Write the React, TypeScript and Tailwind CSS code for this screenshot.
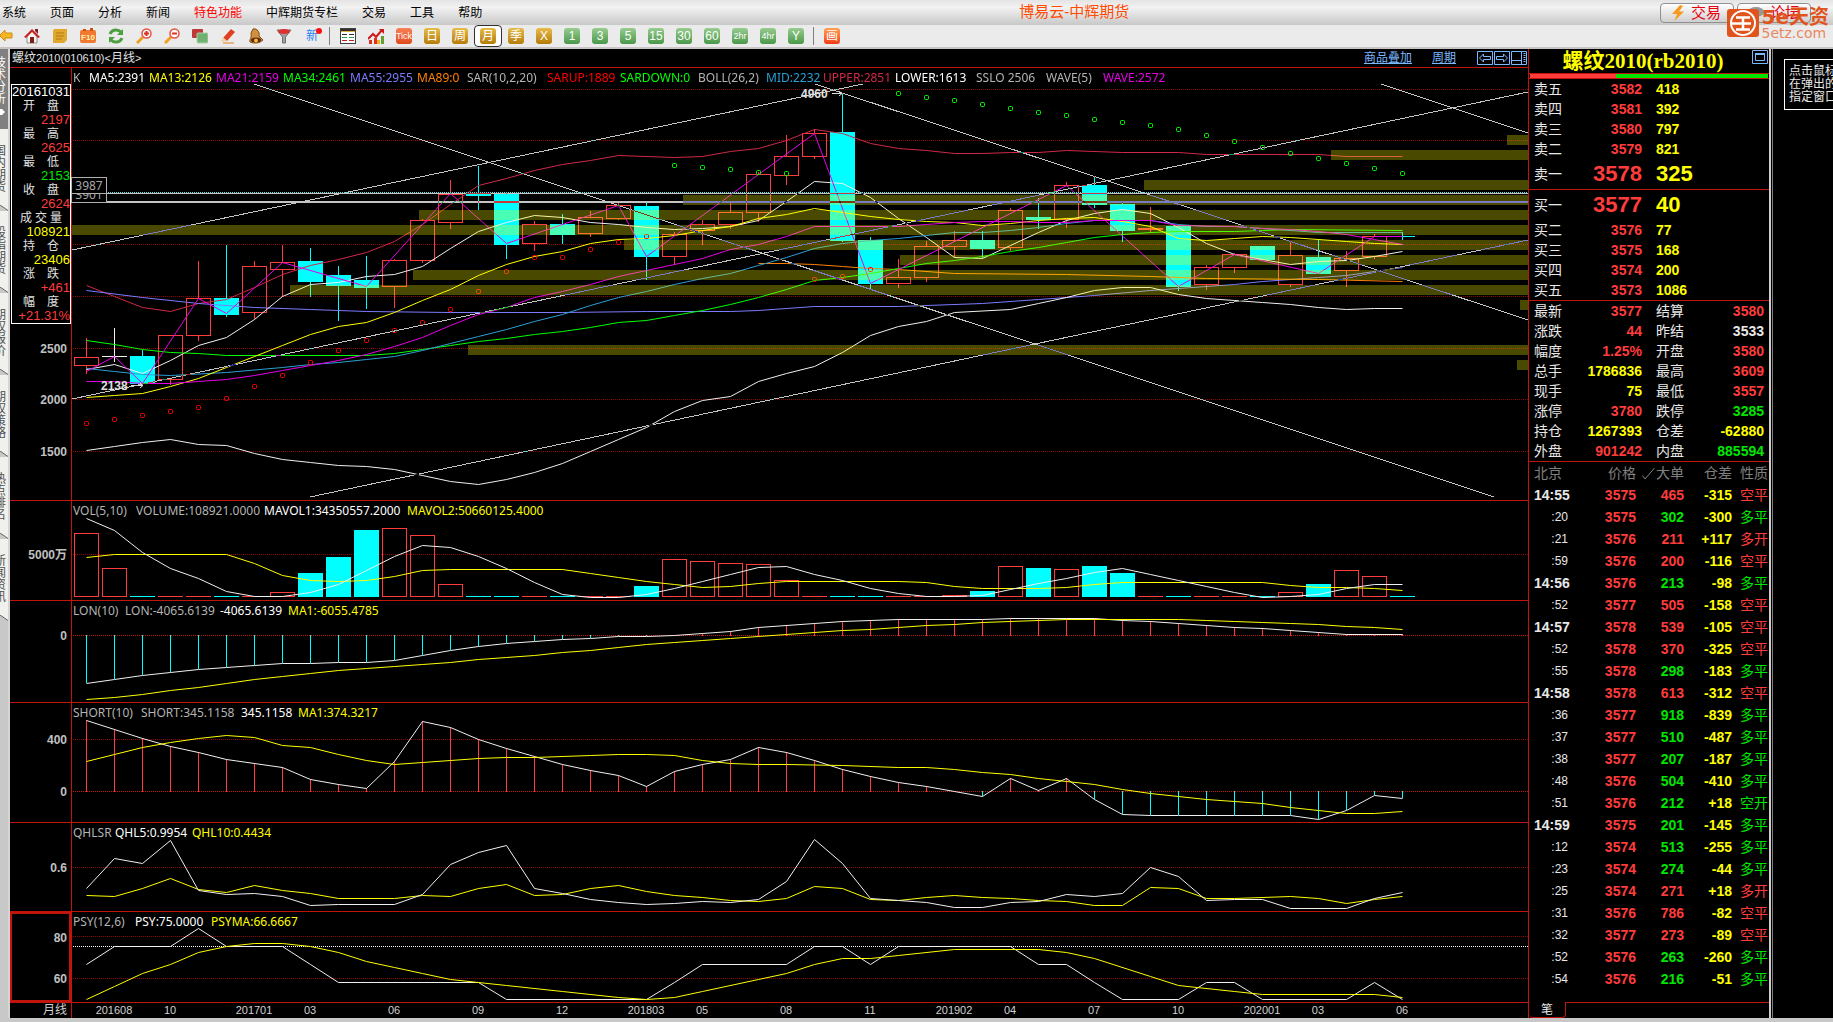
import type { ReactNode } from "react";
import { clsx } from "clsx";

type Point = [number, number];
type Candle = { up: boolean; open: number; close: number; high: number; low: number; color?: string };

const STEP = 28;
const FIRST_X = 86;
const xAt = (i: number) => FIRST_X + i * STEP;

const RED = "#ff3c3c";
const CYAN = "#00ffff";
const YELLOW = "#ffff00";
const GREEN = "#00ff00";
const WHITE = "#f0f0f0";
const MAGENTA = "#e600e6";

// "i:y i:y ..." where i is the bar index
const parse = (s: string): Point[] =>
  s.split(" ").map((p) => p.split(":").map(Number) as Point);

// dir, body top, body bottom, high, low
const CANDLES: Candle[] = (
  "r 357 365 338 373|w 356 356 328 361|c 356 383 350 385|r 335 379 335 384|r 298 335 261 340|c 298 314 245 316|" +
  "r 266 312 261 318|r 262 269 245 296|c 261 281 248 296|c 275 285 266 320|c 280 287 256 308|r 260 286 259 307|" +
  "r 220 260 219 262|r 194 222 180 228|c 193 195 166 209|c 194 244 193 258|r 224 243 221 250|c 224 234 214 243|" +
  "r 217 233 211 236|r 205 218 203 219|c 206 256 203 279|r 234 256 232 264|r 224 230 220 244|r 212 224 203 228|" +
  "r 174 212 172 221|r 156 175 135 184|r 133 156 129 158|c 132 240 93 241|c 240 283 237 289|r 277 283 259 287|" +
  "r 246 277 241 281|r 240 246 231 257|c 240 248 231 257|r 210 247 208 250|c 217 219 198 228|r 185 219 182 227|" +
  "c 185 204 176 207|c 204 230 202 241|r 228 229 207 232|c 226 286 225 290|r 267 284 265 289|r 254 267 253 272|" +
  "c 246 259 246 259|r 255 284 241 286|c 257 273 239 273|r 258 270 251 286|r 236 256 234 258|c 236 237 232 239"
)
  .split("|")
  .map((row) => {
    const [dir, open, close, high, low] = row.split(" ");
    return {
      up: dir === "r",
      color: dir === "w" ? WHITE : undefined,
      open: +open,
      close: +close,
      high: +high,
      low: +low,
    };
  });

const MAIN_LINES: { color: string; points: string }[] = [
  {
    color: "#d02848",
    points:
      "0:285 1:296 2:307 3:311 4:303 5:299 6:287 7:274 8:265 9:259 10:252 11:241 12:224 13:204 14:185 15:178 16:170 17:164 18:160 19:155 21:157 22:156 23:151 24:148 25:140 26:129 27:133 28:143 29:148 30:150 31:153 32:153 33:152 34:152 35:150 37:152 39:152 40:154 44:154 45:156 47:156",
  },
  {
    color: "#7b7bff",
    points:
      "0:290 2:297 4:303 6:307 8:309 10:311 13:312 17:312 20:311 23:311 24:310 26:306 29:306 32:303 34:299 36:295 38:290 39:288 40:286 41:284 42:281 43:279 44:277 45:275 46:271 47:267",
  },
  { color: "#ff8000", points: "24:263 25:263 26:264 27:266 28:268 29:269 31:273 35:274 38:276 39:277 40:278 44:279 47:281" },
  {
    color: WHITE,
    points:
      "0:450 1:446 2:442 3:439 4:444 5:445 6:453 7:459 8:462 9:465 10:466 11:469 12:475 13:481 14:484 15:479 16:472 17:463 18:451 19:439 20:427 21:411 22:400 23:396 24:381 25:373 26:366 27:352 28:335 29:326 30:321 31:312 33:309 34:303 35:297 36:290 37:287 38:287 39:294 40:298 41:300 42:302 43:304 44:307 45:309 46:308 47:308",
  },
  {
    color: WHITE,
    points:
      "0:369 1:364 2:373 3:360 4:345 5:337 6:319 7:296 8:284 9:282 10:276 11:274 12:266 13:248 14:231 15:222 16:215 17:217 18:222 19:224 20:227 21:229 22:228 23:226 24:220 25:201 26:181 27:183 28:197 29:218 30:237 31:257 32:258 33:245 34:232 35:220 36:213 37:209 38:213 39:227 40:243 41:254 42:259 43:264 44:261 45:260 46:256 47:251",
  },
  {
    color: GREEN,
    points:
      "0:340 1:344 2:349 3:352 4:353 5:355 10:355 11:353 12:349 13:345 14:341 15:338 16:334 17:331 18:327 19:322 20:320 21:315 22:310 23:304 24:297 25:289 26:280 27:277 28:273 29:268 30:263 31:260 32:256 33:251 34:247 35:242 36:237 37:234 38:232 39:231 41:231 42:230 43:229 47:230",
  },
  {
    color: "#2b9fd4",
    points:
      "0:368 1:371 2:374 3:375 5:372 7:367 8:364 9:362 10:359 11:356 12:350 13:343 14:336 15:329 16:321 17:314 18:305 19:297 20:291 21:284 22:278 23:273 24:265 25:257 26:248 27:243 28:240 29:238 30:235 31:232 32:232 33:230 34:227 35:223 36:220 38:220 39:224 40:226 41:226 42:228 44:232 47:232",
  },
  {
    color: YELLOW,
    points:
      "0:397 1:395 2:393 3:386 4:378 5:367 6:356 7:345 8:334 9:326 10:322 11:312 12:300 13:289 14:275 15:264 16:256 17:251 18:243 19:239 20:238 21:235 22:230 23:226 24:218 25:214 26:208 27:212 28:216 29:219 30:221 31:222 32:225 33:223 34:220 35:218 36:217 37:221 38:226 39:238 40:240 41:238 42:236 43:237 44:239 45:241 46:243 47:244",
  },
  {
    color: MAGENTA,
    points:
      "0:381 1:381 2:383 3:383 4:381 5:379 6:375 7:370 8:365 9:360 10:354 11:346 12:337 13:325 14:314 15:307 16:297 17:291 18:284 19:276 20:270 21:264 22:258 23:249 24:244 25:236 26:226 27:226 29:226 30:224 31:222 32:221 33:221 34:222 35:222 36:220 38:220 39:225 41:226 42:228 43:229 44:231 45:234 46:239 47:244",
  },
  {
    color: MAGENTA,
    points: "0:371 1:356 2:383 4:298 5:313 7:262 10:286 13:193 15:243 19:205 20:256 26:133 28:283 35:185 39:286 41:254 44:273 46:236 47:236",
  },
];

const SAR_UP =
  "0:423 1:419 2:415 3:411 4:407 5:398 6:386 7:375 8:362 9:350 10:340 11:330 12:322 13:309 14:291 15:271 16:257 17:257 18:249 19:242 20:236 26:279 27:276 28:269";
const SAR_DOWN =
  "21:165 22:167 23:169 24:172 25:173 29:93 30:97 31:100 32:104 33:108 34:112 35:115 36:119 37:122 38:125 39:129 40:135 41:141 42:147 43:153 44:158 45:163 46:168 47:173";

// start x, top y; each band runs to the right edge
const BANDS: Point[] = [
  [1507, 135], [1331, 150], [1144, 180], [683, 195], [419, 210], [72, 225], [624, 240],
  [900, 255], [413, 270], [290, 285], [1520, 300], [468, 345], [1517, 360],
];

const TREND_LINES = [
  [254, 84, 1494, 497],
  [815, 84, 1528, 320],
  [1381, 84, 1528, 133],
  [72, 250, 863, 84],
  [72, 399, 1528, 92],
  [310, 497, 1528, 240],
];

const VOLUME_BARS =
  "r533 r568 c596 r596 r596 c596 r596 r592 c573 c557 c530 r528 r535 r584 c596 c596 r596 c596 r596 r596 c586 r559 r561 r563 r564 r580 r596 c596 c596 r596 r596 r595 c591 r566 c568 r569 c566 c573 r596 c596 r596 r596 c596 r592 c584 r570 r576 c596".split(
    " ",
  );

const LON =
  "0:683 1:679 2:675 3:672 4:669 5:667 6:665 7:663 8:663 9:662 10:662 11:660 12:655 13:650 14:646 15:643 16:641 17:639 18:638 19:636 20:636 21:635 22:633 23:631 24:627 25:625 26:623 27:621 28:620 29:619 30:619 31:619 32:619 33:618 34:618 35:618 36:618 37:620 38:621 39:623 40:625 41:627 42:628 43:630 44:632 45:634 46:634 47:634";
const SHORT =
  "0:720 1:729 2:738 3:746 4:752 5:759 6:763 7:767 8:779 9:784 10:788 11:761 12:721 13:727 14:739 15:748 16:756 17:764 18:770 19:775 20:786 21:771 22:764 23:759 24:747 25:752 26:760 27:769 28:776 29:782 30:786 31:791 32:796 33:778 34:790 35:778 36:799 37:814 38:815 39:815 40:815 41:815 42:815 43:815 44:819 45:810 46:795 47:798";

const SANS = "font-['Liberation_Sans','Noto_Sans_CJK_SC',sans-serif]";
const LEGEND = "font-['Noto_Sans','Noto_Sans_CJK_SC',sans-serif]";

function Line({ points, color }: { points: string; color: string }) {
  return (
    <polyline
      points={parse(points).map(([i, y]) => `${xAt(i) + 0.5},${y + 0.5}`).join(" ")}
      fill="none"
      stroke={color}
    />
  );
}

function GridLine({ y, color = "#8c0000" }: { y: number; color?: string }) {
  return <line x1="73" x2="1528" y1={y + 0.5} y2={y + 0.5} stroke={color} strokeDasharray="1 1" shapeRendering="crispEdges" />;
}

function Stems({ points, zero }: { points: string; zero: number }) {
  return (
    <g shapeRendering="crispEdges">
      {parse(points).map(([i, y]) => (
        <line key={i} x1={xAt(i) + 0.5} x2={xAt(i) + 0.5} y1={zero + (y > zero ? 0 : 1)} y2={y} stroke={y > zero ? CYAN : RED} />
      ))}
    </g>
  );
}

function Dots({ points, color }: { points: string; color: string }) {
  return (
    <>
      {parse(points).map(([i, y]) => (
        <rect key={i} x={xAt(i) - 1.5} y={y - 1.5} width="4" height="4" rx="1" fill="none" stroke={color} />
      ))}
    </>
  );
}

type Legend = [text: string, cls: string];

function Panel(props: {
  top: number;
  height: number;
  legend: Legend[];
  ticks: [number, string][];
  active?: boolean;
  children: ReactNode;
  overlay?: ReactNode;
}) {
  const { top, height, legend, ticks, active, children, overlay } = props;
  return (
    <section className="relative flex min-h-0 border-b border-[#c0140c]">
      <div className={clsx("relative w-[61px] shrink-0", active && "border-2 border-[#c0140c]")}>
        {ticks.map(([y, label]) => (
          <span
            key={label}
            className={clsx(
              "absolute -translate-y-1/2 text-xs font-bold leading-3 text-[#c0c0c0]",
              active ? "right-0.5" : "right-1",
            )}
            style={{ top: `${((y - top) / height) * 100}%` }}
          >
            {label}
          </span>
        ))}
      </div>
      <div className="relative isolate min-w-0 flex-1 border-l border-[#c0140c] bg-black">
        <svg
          className="absolute inset-0 h-full w-full"
          viewBox={`72 ${top} 1456 ${height}`}
          preserveAspectRatio="none"
        >
          {children}
        </svg>
        <div className={clsx("absolute left-px top-0 flex gap-1 whitespace-nowrap text-xs leading-5", LEGEND)}>
          {legend.map(([text, cls]) => (
            <span key={text} className={cls}>
              {text}
            </span>
          ))}
        </div>
      </div>
      {overlay}
    </section>
  );
}

const MAIN_LEGEND: Legend[] = [
  ["K", "w-3 text-[#b4b4b4]"],
  ["MA5:2391", "w-14 text-white"],
  ["MA13:2126", "w-[63px] text-[#ffff00]"],
  ["MA21:2159", "w-[63px] text-[#e600e6]"],
  ["MA34:2461", "w-[63px] text-[#00ff00]"],
  ["MA55:2955", "w-[63px] text-[#7b7bff]"],
  ["MA89:0", "w-[46px] text-[#ff8000]"],
  ["SAR(10,2,20)", "w-[76px] text-[#b4b4b4]"],
  ["SARUP:1889", "w-[69px] text-[#ff0000]"],
  ["SARDOWN:0", "w-[74px] text-[#00ff00]"],
  ["BOLL(26,2)", "w-16 text-[#b4b4b4]"],
  ["MID:2232", "w-[53px] text-[#2b9fd4]"],
  ["UPPER:2851", "w-[68px] text-[#d02848]"],
  ["LOWER:1613", "w-[77px] text-white"],
  ["SSLO 2506", "w-[66px] text-[#b4b4b4]"],
  ["WAVE(5)", "w-[53px] text-[#b4b4b4]"],
  ["WAVE:2572", "text-[#e600e6]"],
];

const CURSOR_INFO: [string, string, string][] = [
  ["开盘", "2197", "text-[#ff3c3c]"],
  ["最高", "2625", "text-[#ff3c3c]"],
  ["最低", "2153", "text-[#00e600]"],
  ["收盘", "2624", "text-[#ff3c3c]"],
  ["成交量", "108921", "text-[#ffff00]"],
  ["持仓", "23406", "text-[#ffff00]"],
  ["涨跌", "+461", "text-[#ff3c3c]"],
  ["幅度", "+21.31%", "text-[#ff3c3c]"],
];

function CursorInfo() {
  return (
    <div className="absolute left-px top-4 w-[60px] border border-white bg-black text-[13px]">
      <div className="text-center leading-[14px] text-white">20161031</div>
      {CURSOR_INFO.map(([label, value, cls]) => (
        <div key={label}>
          <div
            className={clsx(
              "flex justify-center text-xs leading-[14px] text-[#e0e0e0]",
              label.length === 3 ? "gap-[3px]" : "gap-3",
            )}
          >
            {label.split("").map((ch) => (
              <span key={ch}>{ch}</span>
            ))}
          </div>
          <div className={clsx("text-right leading-[14px]", cls)}>{value}</div>
        </div>
      ))}
    </div>
  );
}

function PriceTag({ y, children }: { y: number; children: ReactNode }) {
  return (
    <span
      className={clsx(
        "absolute left-[61px] h-[17px] w-9 border border-[#b0b0b0] bg-black text-center text-xs leading-4 text-[#a8a8a8]",
        LEGEND,
      )}
      style={{ top: `${((y - 68) / 432) * 100}%` }}
    >
      {children}
    </span>
  );
}

function PeakLabel({ x, y, children }: { x: number; y: number; children: ReactNode }) {
  return (
    <span
      className="absolute -translate-y-1/2 text-xs font-bold leading-3 text-[#e0e0e0]"
      style={{ left: `${((x - 10) / 1518) * 100}%`, top: `${((y - 68) / 432) * 100}%` }}
    >
      {children}
    </span>
  );
}

function MainPanel() {
  return (
    <Panel
      top={68}
      height={432}
      legend={MAIN_LEGEND}
      ticks={[[349, "2500"], [400, "2000"], [452, "1500"]]}
      overlay={
        <>
          <PriceTag y={186}>3901</PriceTag>
          <PriceTag y={177}>3987</PriceTag>
          <PeakLabel x={801} y={94}>4960</PeakLabel>
          <PeakLabel x={101} y={386}>2138</PeakLabel>
          <CursorInfo />
        </>
      }
    >
      {[89, 140, 244, 296, 348, 399, 451].map((y) => (
        <GridLine key={y} y={y} />
      ))}
      <g shapeRendering="crispEdges">
        {CANDLES.map((c, i) => {
          const x = xAt(i);
          const color = c.color ?? (c.up ? RED : CYAN);
          const last = i === CANDLES.length - 1;
          return (
            <g key={i} stroke={color}>
              <line x1={x + 0.5} x2={x + 0.5} y1={c.high} y2={c.open} />
              <line x1={x + 0.5} x2={x + 0.5} y1={c.close} y2={c.low + 1} />
              <rect
                x={x - 11.5}
                y={c.open + 0.5}
                width="24"
                height={last ? 0.1 : Math.max(c.close - c.open, 0.1)}
                fill={c.up ? "none" : color}
              />
            </g>
          );
        })}
      </g>
      {MAIN_LINES.map((l, i) => (
        <Line key={i} {...l} />
      ))}
      <Dots points={SAR_UP} color="#ff0000" />
      <Dots points={SAR_DOWN} color={GREEN} />
      <g fill="#ffff00" fillOpacity="0.286" shapeRendering="crispEdges">
        {BANDS.map(([x, y]) => (
          <rect key={y} x={x} y={y} width={1528 - x} height="10" />
        ))}
      </g>
      <g className="mix-blend-difference" stroke="#c4c4c4" shapeRendering="crispEdges">
        {TREND_LINES.map(([x1, y1, x2, y2]) => (
          <line key={`${x1}-${y1}`} x1={x1} y1={y1} x2={x2} y2={y2} />
        ))}
        <line x1="72" x2="1528" y1="193.5" y2="193.5" />
        <line x1="72" x2="1528" y1="202" y2="202" strokeWidth="2" />
      </g>
      <line x1="72" x2="1528" y1="192.5" y2="192.5" stroke="#60e0e0" strokeDasharray="1 1" shapeRendering="crispEdges" />
      <path d="M832 93.5H842M839 91l3 2.5l-3 2.5M131 385.5h4M138 385.5h4M140 383l3 2.5l-3 2.5" fill="none" stroke="#e0e0e0" />
    </Panel>
  );
}

function VolumePanel() {
  return (
    <Panel
      top={501}
      height={99}
      legend={[
        ["VOL(5,10)", "w-[59px] text-[#b4b4b4]"],
        ["VOLUME:108921.0000", "w-[124px] text-[#b4b4b4]"],
        ["MAVOL1:34350557.2000", "w-[139px] text-white"],
        ["MAVOL2:50660125.4000", "text-[#ffff00]"],
      ]}
      ticks={[[555, "5000万"]]}
    >
      <GridLine y={554} />
      <g shapeRendering="crispEdges">
        {VOLUME_BARS.map((bar, i) => {
          const y = Number(bar.slice(1));
          const up = bar[0] === "r";
          return (
            <rect
              key={i}
              x={xAt(i) - 11.5}
              y={y + 0.5}
              width="24"
              height={Math.max(596 - y, 0.1)}
              fill={up ? "none" : CYAN}
              stroke={up ? RED : CYAN}
            />
          );
        })}
      </g>
      <Line
        color={YELLOW}
        points="0:557 1:554 5:554 6:563 7:575 8:580 9:581 10:580 11:576 12:570 13:569 17:569 18:573 19:577 20:581 21:584 22:587 23:586 24:583 25:581 29:581 30:582 31:586 32:588 34:588 35:587 36:584 37:582 42:582 43:585 44:587 45:587 46:588 47:590"
      />
      <Line
        color={WHITE}
        points="0:518 1:530 2:552 3:568 4:578 5:591 6:596 7:596 8:592 9:584 10:570 11:556 12:545 13:547 14:556 15:568 16:582 17:594 18:597 19:597 20:594 21:588 22:581 23:574 24:567 25:566 26:574 27:580 28:588 29:593 30:596 31:596 32:595 33:589 34:583 35:578 36:572 37:568 38:574 39:580 40:586 41:592 42:597 43:596 44:594 45:588 46:584 47:584"
      />
    </Panel>
  );
}

function LonPanel() {
  return (
    <Panel
      top={601}
      height={101}
      legend={[
        ["LON(10)", "w-12 text-[#b4b4b4]"],
        ["LON:-4065.6139", "w-[91px] text-[#b4b4b4]"],
        ["-4065.6139", "w-16 text-white"],
        ["MA1:-6055.4785", "text-[#ffff00]"],
      ]}
      ticks={[[636, "0"]]}
    >
      <GridLine y={635} color="#c0140c" />
      <Stems points={LON} zero={635} />
      <Line color={WHITE} points={LON} />
      <Line
        color={YELLOW}
        points="0:699 1:697 2:694 3:690 4:687 5:683 6:679 7:676 8:673 9:670 10:668 11:666 12:664 13:662 14:659 15:657 16:655 17:652 18:650 19:647 20:644 21:642 22:640 23:638 24:636 25:634 26:632 27:630 28:629 29:627 30:625 31:624 32:622 33:621 34:620 35:619 39:619 40:620 41:621 42:622 43:623 44:624 45:626 46:627 47:629"
      />
    </Panel>
  );
}

function ShortPanel() {
  return (
    <Panel
      top={703}
      height={119}
      legend={[
        ["SHORT(10)", "w-16 text-[#b4b4b4]"],
        ["SHORT:345.1158", "w-24 text-[#b4b4b4]"],
        ["345.1158", "w-[53px] text-white"],
        ["MA1:374.3217", "text-[#ffff00]"],
      ]}
      ticks={[[740, "400"], [792, "0"]]}
    >
      <GridLine y={739} />
      <GridLine y={791} color="#c0140c" />
      <Stems points={SHORT} zero={791} />
      <Line color={WHITE} points={SHORT} />
      <Line
        color={YELLOW}
        points="0:761 1:754 2:747 3:742 4:738 5:735 6:737 7:745 8:747 9:754 10:760 11:764 12:762 13:760 14:758 15:757 16:757 18:755 19:754 20:754 21:755 22:760 23:763 24:764 25:764 27:765 29:767 30:767 31:769 32:772 33:774 34:778 35:781 36:784 37:789 38:793 39:796 40:799 41:801 42:803 43:807 44:810 45:813 46:813 47:811"
      />
    </Panel>
  );
}

function QhlsrPanel() {
  return (
    <Panel
      top={823}
      height={88}
      legend={[
        ["QHLSR", "w-[38px] text-[#b4b4b4]"],
        ["QHL5:0.9954", "w-[73px] text-white"],
        ["QHL10:0.4434", "text-[#ffff00]"],
      ]}
      ticks={[[868, "0.6"]]}
    >
      <GridLine y={867} />
      <Line
        color={YELLOW}
        points="0:895 1:896 2:888 3:878 4:889 5:892 6:885 7:890 8:893 9:898 11:898 12:895 13:896 14:888 15:884 16:895 17:894 18:888 19:885 20:891 21:895 22:897 23:900 24:901 25:898 26:886 27:888 28:899 29:900 30:897 31:895 32:897 33:898 34:900 35:901 36:905 37:905 38:887 39:888 40:898 41:898 43:896 44:898 45:903 46:899 47:896"
      />
      <Line
        color={WHITE}
        points="0:888 1:858 2:863 3:840 4:890 5:894 6:893 7:896 8:905 9:904 11:904 12:894 13:864 14:852 15:845 16:888 17:893 18:899 19:902 20:904 21:903 22:901 23:902 24:899 25:881 26:839 27:863 28:898 29:900 30:902 31:907 32:907 33:902 34:901 35:894 36:896 37:893 38:867 39:876 40:900 41:899 42:899 43:908 45:908 46:898 47:892"
      />
    </Panel>
  );
}

function PsyPanel() {
  return (
    <Panel
      top={912}
      height={90}
      active
      legend={[
        ["PSY(12,6)", "w-[58px] text-[#b4b4b4]"],
        ["PSY:75.0000", "w-[72px] text-white"],
        ["PSYMA:66.6667", "text-[#ffff00]"],
      ]}
      ticks={[[937, "80"], [980, "60"]]}
    >
      <GridLine y={936} />
      <GridLine y={978} />
      <GridLine y={946} color="#ffffff" />
      <Line
        color={WHITE}
        points="0:964 1:946 3:946 4:928 5:946 7:946 8:964 9:982 14:982 15:999 20:999 21:982 22:964 25:964 26:946 27:946 28:964 29:946 33:946 34:964 35:964 36:982 37:999 39:999 40:982 41:982 42:999 45:999 46:982 47:999"
      />
      <Line
        color={YELLOW}
        points="0:999 1:986 2:973 3:964 4:952 5:946 6:943 7:943 8:946 9:952 10:961 11:967 12:973 13:979 14:982 15:985 17:991 19:997 20:999 21:997 22:991 24:979 25:973 26:964 27:958 28:958 29:955 31:949 34:949 35:952 36:958 38:976 39:985 41:991 42:994 46:994 47:997"
      />
    </Panel>
  );
}

const DATES: [number, string][] = [
  [1, "201608"], [3, "10"], [6, "201701"], [8, "03"], [11, "06"], [14, "09"], [17, "12"], [20, "201803"], [22, "05"],
  [25, "08"], [28, "11"], [31, "201902"], [33, "04"], [36, "07"], [39, "10"], [42, "202001"], [44, "03"], [47, "06"],
];

function ChartArea() {
  return (
    <main className="flex min-w-0 flex-1 flex-col">
      <div className="flex h-[19px] shrink-0 items-center border-b border-[#c0140c] pl-0.5 text-xs text-[#e0e0e0]">
        <h1 className="flex-1">
          螺纹<span className="text-[11px]">2010(010610)&lt;</span>月线<span className="text-[11px]">&gt;</span>
        </h1>
        <a href="#overlay" className="mr-5 text-[#7ab8ff] underline">商品叠加</a>
        <a href="#period" className="mr-[21px] text-[#7ab8ff] underline">周期</a>
        <div className="flex gap-px pr-px">
          <button aria-label="上一个">
            <svg width="16" height="14" fill="none" stroke="#7ab8ff" className="block">
              <path d="M.5.5h15v13h-15zM2.500 7l4-4v2.500h7v3h-7V11z" />
            </svg>
          </button>
          <button aria-label="下一个">
            <svg width="16" height="14" fill="none" stroke="#7ab8ff" className="block">
              <path d="M.5.5h15v13h-15zM13.500 7l-4-4v2.500h-7v3h7V11z" />
            </svg>
          </button>
          <button aria-label="布局">
            <svg width="16" height="14" fill="none" stroke="#7ab8ff" className="block">
              <path d="M.5.5h15v13h-15zM10.500.5v13M.5 9.500h10" />
              <path d="M13.500 2v10" strokeWidth="2" strokeDasharray="1 1" />
            </svg>
          </button>
        </div>
      </div>
      <div className="grid min-h-0 flex-1 grid-rows-[433fr_100fr_102fr_120fr_89fr_91fr]">
        <MainPanel />
        <VolumePanel />
        <LonPanel />
        <ShortPanel />
        <QhlsrPanel />
        <PsyPanel />
      </div>
      <div className="flex h-[15px] shrink-0 text-[11px] leading-[15px] text-[#d0d0d0]">
        <span className="w-[61px] pr-1 text-right text-xs leading-[15px]">月线</span>
        <div className="relative flex-1 border-l border-[#c0140c]">
          {DATES.map(([i, label]) => (
            <span
              key={i}
              className="absolute -translate-x-1/2"
              style={{ left: `${((xAt(i) - 72) / 1456) * 100}%` }}
            >
              {label}
            </span>
          ))}
        </div>
      </div>
    </main>
  );
}

const TONE: Record<string, string> = {
  r: "text-[#ff3c3c]",
  g: "text-[#00e600]",
  y: "text-[#ffff00]",
  w: "text-[#e8e8e8]",
};

const ASKS = ["卖五 3582 418", "卖四 3581 392", "卖三 3580 797", "卖二 3579 821", "卖一 3578 325"];
const BIDS = ["买一 3577 40", "买二 3576 77", "买三 3575 168", "买四 3574 200", "买五 3573 1086"];
const STATS = [
  "最新 3577 r 结算 3580 r",
  "涨跌 44 r 昨结 3533 w",
  "幅度 1.25% r 开盘 3580 r",
  "总手 1786836 y 最高 3609 r",
  "现手 75 y 最低 3557 r",
  "涨停 3780 r 跌停 3285 g",
  "持仓 1267393 y 仓差 -62880 y",
  "外盘 901242 r 内盘 885594 g",
];
const TRADES = [
  "14:55 3575 465 -315 空平 r", ":20 3575 302 -300 多平 g", ":21 3576 211 +117 多开 r", ":59 3576 200 -116 空平 r",
  "14:56 3576 213 -98 多平 g", ":52 3577 505 -158 空平 r", "14:57 3578 539 -105 空平 r", ":52 3578 370 -325 空平 r",
  ":55 3578 298 -183 多平 g", "14:58 3578 613 -312 空平 r", ":36 3577 918 -839 多平 g", ":37 3577 510 -487 多平 g",
  ":38 3577 207 -187 多平 g", ":48 3576 504 -410 多平 g", ":51 3576 212 +18 空开 g", "14:59 3575 201 -145 多平 g",
  ":12 3574 513 -255 多平 g", ":23 3574 274 -44 多平 g", ":25 3574 271 +18 多开 r", ":31 3576 786 -82 空平 r",
  ":32 3577 273 -89 空平 r", ":52 3576 263 -260 多平 g", ":54 3576 216 -51 多平 g",
];

function Depth({ rows, big }: { rows: string[]; big: number }) {
  return (
    <table className="w-full table-fixed border-b border-[#c0140c]">
      <tbody>
        {rows.map((row, i) => {
          const [label, price, volume] = row.split(" ");
          return (
            <tr key={label} className={i === big ? "h-[30px]" : "h-5"}>
              <th className="w-[42px] p-0 pl-[5px] text-left font-normal leading-5 text-[#e8e8e8]">{label}</th>
              <td className={clsx("w-[71px] p-0 text-right font-bold leading-5 text-[#ff3c3c]", i === big && "text-[22px]")}>
                {price}
              </td>
              <td className={clsx("p-0 pl-[14px] font-bold leading-5 text-[#ffff00]", i === big && "text-[22px]")}>
                {volume}
              </td>
            </tr>
          );
        })}
      </tbody>
    </table>
  );
}

function QuotePanel() {
  return (
    <aside className="flex w-[241px] shrink-0 flex-col border-l border-[#c0140c] text-sm">
      <header className="relative h-6 text-center">
        <h2 className="pr-3 font-['Liberation_Serif','Noto_Sans_CJK_SC',serif] text-[21px] font-bold leading-6 text-[#ffff00]">
          螺纹2010(rb2010)
        </h2>
        <button aria-label="最大化" className="absolute right-px top-px">
          <svg width="16" height="14" fill="none" stroke="#7ab8ff" className="block">
            <path d="M.5.5h15v13h-15zM3.500 3.500h9v7h-9z" />
            <path d="M3 4h10" strokeWidth="2" />
          </svg>
        </button>
      </header>
      <div className="flex h-1.5 border-y border-[#c0140c] px-px">
        <div className="w-[36%] bg-[#ff3c3c]" />
        <div className="flex-1 bg-[#00e600]" />
      </div>
      <Depth rows={ASKS} big={4} />
      <Depth rows={BIDS} big={0} />
      <table className="w-full table-fixed border-b border-[#c0140c]">
        <tbody>
          {STATS.map((row) => {
            const [l1, v1, t1, l2, v2, t2] = row.split(" ");
            return (
              <tr key={l1} className="h-5">
                <th className="w-[42px] p-0 pl-[5px] text-left font-normal leading-5 text-[#e8e8e8]">{l1}</th>
                <td className={clsx("w-[71px] p-0 text-right font-bold leading-5", TONE[t1])}>{v1}</td>
                <th className="p-0 pl-[14px] text-left font-normal leading-5 text-[#e8e8e8]">{l2}</th>
                <td className={clsx("p-0 pr-[5px] text-right font-bold leading-5", TONE[t2])}>{v2}</td>
              </tr>
            );
          })}
        </tbody>
      </table>
      <table className="w-full table-fixed">
        <thead>
          <tr className="h-[22px] text-[#808080]">
            <th className="w-[42px] p-0 pl-[5px] text-left font-normal leading-5">北京</th>
            <th className="w-[65px] p-0 text-right font-normal leading-5">价格</th>
            <th className="w-12 whitespace-nowrap p-0 text-right font-normal leading-5">
              <svg width="13" height="13" viewBox="0 0 13 13" fill="none" stroke="#808080" className="mr-px inline">
                <path d="M.5 8.500L3 12L12.500 1" />
              </svg>
              大单
            </th>
            <th className="w-12 p-0 text-right font-normal leading-5">仓差</th>
            <th className="p-0 pr-px text-right font-normal leading-5">性质</th>
          </tr>
        </thead>
        <tbody>
          {TRADES.map((row, i) => {
            const [time, price, lots, diff, kind, tone] = row.split(" ");
            return (
              <tr key={i} className="h-[22px]">
                <td
                  className={clsx(
                    "p-0 leading-5 text-[#e8e8e8]",
                    time.length > 3 ? "pl-[5px] font-bold" : "pr-[3px] text-right text-xs",
                  )}
                >
                  {time}
                </td>
                <td className="p-0 text-right font-bold leading-5 text-[#ff3c3c]">{price}</td>
                <td className={clsx("p-0 text-right font-bold leading-5", TONE[tone])}>{lots}</td>
                <td className="p-0 text-right font-bold leading-5 text-[#ffff00]">{diff}</td>
                <td className={clsx("p-0 pr-px text-right leading-5", TONE[tone])}>{kind}</td>
              </tr>
            );
          })}
        </tbody>
      </table>
      <div className="mt-auto flex h-4">
        <button className="w-[37px] rounded-b-sm border-b border-r border-[#c0140c] text-center text-xs leading-4 text-[#e8e8e8]">
          笔
        </button>
        <div className="flex-1 border-t border-[#c0140c]" />
      </div>
    </aside>
  );
}

const MENU = ["系统", "页面", "分析", "新闻", "特色功能", "中辉期货专栏", "交易", "工具", "帮助"];

function Logo() {
  return (
    <div className="absolute right-1 top-[7px] flex items-start gap-[3px] text-[#e0541c]">
      <svg width="32" height="30" viewBox="0 0 32 30" className="mt-0.5">
        <rect width="32" height="28" rx="3" fill="#e0541c" />
        <circle cx="16" cy="14" r="12" fill="none" stroke="#fff" strokeWidth="2" />
        <path d="M9 8.500h14M8 14.500h16M16 8v13M4 14.500h4M9 20.500h14" stroke="#fff" strokeWidth="2.500" fill="none" />
      </svg>
      <div>
        <div className="font-['DejaVu_Sans','Noto_Sans_CJK_SC',sans-serif] text-xl font-bold leading-5">
          5e天资
        </div>
        <div className="font-['DejaVu_Sans',sans-serif] text-sm leading-3 text-[#e8875e]">5etz.com</div>
      </div>
    </div>
  );
}

function MenuBar() {
  return (
    <header className="relative flex h-[25px] shrink-0 items-center justify-between overflow-visible bg-linear-to-b from-[#e4e4e4] via-[#f2f2f2] via-30% to-[#c8c8c8] text-black">
      <nav className="flex gap-6 whitespace-nowrap pl-0.5 text-xs">
        {MENU.map((item) => (
          <button key={item} className={clsx(item === "特色功能" && "text-[#ff0000]")}>
            {item}
          </button>
        ))}
      </nav>
      <span className="flex-1 pl-[537px] text-[15px] text-[#ff4a00]">博易云-中辉期货</span>
      <div className="mr-[22px] flex shrink-0 gap-[3px] text-[15px] leading-4 text-[#e60012]">
        <button className="flex h-5 w-[74px] items-center gap-1.5 rounded-sm border border-[#909090] bg-linear-to-b from-white to-[#cfcfcf] pl-2.5">
          <svg width="14" height="16" viewBox="0 0 14 16">
            <path d="M9 0L1 9h5L3.500 16L13 6.500H8L12 1z" fill="#f59a1c" />
          </svg>
          交易
        </button>
        <button className="flex h-5 w-[74px] items-center gap-1.5 rounded-sm border border-[#909090] bg-linear-to-b from-white to-[#cfcfcf] pl-2.5">
          <svg width="16" height="14" viewBox="0 0 16 14">
            <ellipse cx="8" cy="6" rx="8" ry="5" fill="#909aa0" />
          </svg>
          论坛
        </button>
      </div>
      <Logo />
    </header>
  );
}

const TILE = {
  gold: "border-[#c89018] bg-linear-to-b from-[#e6bc48] to-[#b47c00]",
  green: "border-[#5aa85a] bg-linear-to-b from-[#98cc90] to-[#489848]",
  red: "border-[#e86040] bg-linear-to-b from-[#f88058] to-[#e04818]",
  flame: "border-[#f06030] bg-linear-to-b from-[#ffa050] to-[#f03818]",
};

function Tile({ tone, children, active }: { tone: keyof typeof TILE; children: string; active?: boolean }) {
  return (
    <button
      className={clsx(
        "flex h-[22px] w-7 items-center justify-center",
        active && "rounded-sm border border-[#303030] bg-white",
      )}
    >
      <span
        className={clsx(
          "flex size-4 items-center justify-center rounded-[3px] leading-none text-white",
          children.length > 2 ? "text-[9px]" : "text-xs",
          TILE[tone],
        )}
      >
        {children}
      </span>
    </button>
  );
}

function IconButton({ label, children }: { label: string; children: ReactNode }) {
  return (
    <button aria-label={label} className="flex h-[22px] w-7 items-center justify-center">
      <svg width="16" height="16" viewBox="0 0 16 16">
        {children}
      </svg>
    </button>
  );
}

const Separator = () => <span className="mx-[3px] h-[18px] w-0.5 border-l border-[#808080]" />;

function Toolbar() {
  return (
    <div className="flex h-[24px] shrink-0 items-start border-b-2 border-[#c8c4c4] bg-[#ebebeb]">
      <button aria-label="后退" className="flex h-[22px] w-[18px] items-center">
        <svg width="13" height="16" viewBox="0 0 13 16">
          <path d="M0 7L5 2v3h7v5H5v3L0 8z" fill="#f5b820" stroke="#d08a10" />
        </svg>
      </button>
      <IconButton label="首页">
        <path d="M3 8v7h10V8L8 3z" fill="#f4f4f4" stroke="#909090" />
        <path d="M0 9L8 1l8 8l-2 1L8 4L2 10z" fill="#c82020" />
        <path d="M11 1h3v5l-3-3z" fill="#802020" />
        <path d="M6 9h4v6H6z" fill="#802010" />
      </IconButton>
      <IconButton label="公告">
        <path d="M2 1h13v11l-3 3H1V3z" fill="#e0a82c" />
        <path d="M4 5h8M4 8h8M4 11h6" stroke="#b07810" />
      </IconButton>
      <IconButton label="F10">
        <rect y="2" width="16" height="13" rx="2" fill="#f07830" />
        <path d="M3 1h3v2H3zM10 0h3v3h-3z" fill="#d05010" />
        <text x="8" y="12" textAnchor="middle" fontSize="8" fontWeight="bold" fill="#fff3b0">F10</text>
      </IconButton>
      <IconButton label="刷新">
        <path d="M2 6c2-5 8-5 11-2" fill="none" stroke="#4ca040" strokeWidth="3" />
        <path d="M15 1v6H9z" fill="#4ca040" />
        <path d="M14 10c-2 5-8 5-11 2" fill="none" stroke="#4ca040" strokeWidth="3" />
        <path d="M1 15V9h6z" fill="#4ca040" />
      </IconButton>
      <IconButton label="放大">
        <path d="M1 15l6-6" stroke="#f0a020" strokeWidth="3" />
        <circle cx="10.500" cy="5.500" r="4.500" fill="#fff" stroke="#e85040" strokeWidth="1.500" />
        <path d="M8 5.500h5M10.500 3v5" stroke="#d83020" strokeWidth="2" />
      </IconButton>
      <IconButton label="缩小">
        <path d="M1 15l6-6" stroke="#f0a020" strokeWidth="3" />
        <circle cx="10.500" cy="5.500" r="4.500" fill="#fff" stroke="#e85040" strokeWidth="1.500" />
        <path d="M8 5.500h5" stroke="#d83020" strokeWidth="2" />
      </IconButton>
      <IconButton label="叠加">
        <rect y="1" width="11" height="9" rx="1" fill="#c03838" />
        <rect x="5" y="5" width="11" height="10" rx="1" fill="#70b070" stroke="#a8d0a8" />
      </IconButton>
      <IconButton label="画线">
        <path d="M3 10L11 1l4 3l-8 9z" fill="#e04020" />
        <path d="M1 14L3 9l4 4z" fill="#f4d0a0" />
        <path d="M3 15h11" stroke="#e08020" />
      </IconButton>
      <IconButton label="预警">
        <path d="M5 1c4-1 7 3 6 7l4 4c-3 3-8 4-13 2C1 12 4 10 3 5z" fill="#d09040" stroke="#804810" />
        <ellipse cx="8" cy="12" rx="5" ry="2.500" fill="#602810" />
        <circle cx="8" cy="12.500" r="2" fill="#f0c030" />
      </IconButton>
      <IconButton label="筛选">
        <path d="M1 2h14L9.500 9v6h-3V9z" fill="#a0a0a0" stroke="#707070" />
        <ellipse cx="8" cy="3.500" rx="6" ry="2.500" fill="#e03030" />
      </IconButton>
      <button className="relative h-[22px] w-7 text-center text-xs leading-[22px] text-[#3080f0]">
        新
        <span className="absolute right-1 top-[3px] size-1.5 rounded-full bg-[#ff1010]" />
      </button>
      <div className="flex h-[22px] w-2 items-center"><Separator /></div>
      <IconButton label="报价">
        <rect x=".5" y=".5" width="15" height="15" fill="#fff" stroke="#404040" />
        <path d="M1 2h14" stroke="#303030" strokeWidth="2" />
        <path d="M1 3.500h14" stroke="#e0b040" />
        <path d="M2 6.500h5M9 6.500h5" stroke="#303030" />
        <path d="M2 9.500h5M9 9.500h5" stroke="#20a040" />
        <path d="M2 12.500h5M9 12.500h5" stroke="#c02020" />
      </IconButton>
      <IconButton label="走势">
        <path d="M1 16v-4h3v4z M6 16v-6h3v6z" fill="#e03020" />
        <path d="M9 16v-4h3v4z" fill="#f0b020" />
        <path d="M13 16v-8h3v8z" fill="#60a030" />
        <path d="M0 11l5-5l3 3l6-7" fill="none" stroke="#d01818" strokeWidth="2" />
        <path d="M11 1h5v5z" fill="#d01818" />
      </IconButton>
      <Tile tone="red">Tick</Tile>
      <Tile tone="gold">日</Tile>
      <Tile tone="gold">周</Tile>
      <Tile tone="gold" active>月</Tile>
      <Tile tone="gold">季</Tile>
      <Tile tone="gold">X</Tile>
      {["1", "3", "5", "15", "30", "60", "2hr", "4hr", "Y"].map((t) => (
        <Tile key={t} tone="green">{t}</Tile>
      ))}
      <div className="flex h-[22px] w-2 items-center"><Separator /></div>
      <Tile tone="flame">画</Tile>
    </div>
  );
}

const SIDE_TABS = ["国内期货", "股指期货", "期权报价", "期权策略", "热点排名", "新闻资讯"];

function SideTabs() {
  return (
    <nav className="flex w-2.5 shrink-0 flex-col border-r-2 border-[#d8d4d4] bg-[#c8c8c8] text-xs leading-3">
      <button className="flex h-20 flex-col items-end overflow-hidden bg-[#808080] pr-0.5 pt-2 text-white">
        {"技术分析".split("").map((ch) => (
          <span key={ch}>{ch}</span>
        ))}
        <svg width="6" height="6" className="mt-1">
          <path d="M0 0h2l3 3l-3 3H0z" fill="#fff" />
        </svg>
      </button>
      {SIDE_TABS.map((tab) => (
        <button key={tab} className="relative flex h-[82px] flex-col items-end overflow-hidden bg-[#f0f0ec] pr-0.5 pt-4 text-[#505050]">
          {tab.split("").map((ch) => (
            <span key={ch}>{ch}</span>
          ))}
          <svg width="8" height="6" className="absolute bottom-0 right-0">
            <path d="M0 0v6h8z" fill="#c8c8c8" />
            <path d="M0 0L8 5.500" stroke="#606060" />
          </svg>
        </button>
      ))}
    </nav>
  );
}

export default function App() {
  return (
    <div className={clsx("flex h-screen w-full flex-col overflow-hidden bg-black", SANS)}>
      <MenuBar />
      <Toolbar />
      <div className="flex min-h-0 flex-1">
        <SideTabs />
        <ChartArea />
        <QuotePanel />
        <div className="w-[3px] shrink-0 border-l-2 border-[#d0cccc]" />
        <div className="w-[61px] shrink-0 overflow-hidden border-l border-[#808080] pl-[11px] pt-2.5">
          <p className="w-20 border border-white px-1 py-[5px] text-xs leading-[13px] text-[#e8e8e8]">
            点击鼠标
            <br />
            在弹出的
            <br />
            指定窗口
          </p>
        </div>
      </div>
      <footer className="h-1 shrink-0 bg-[#c8c8c8]" />
    </div>
  );
}
